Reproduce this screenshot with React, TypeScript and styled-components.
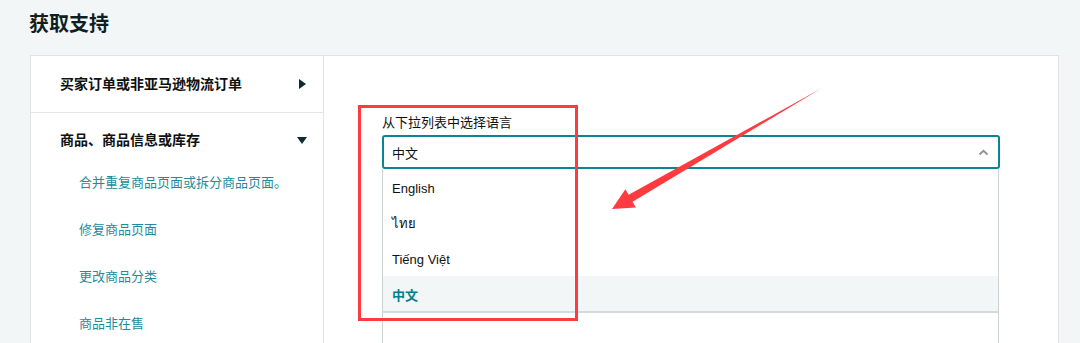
import * as React from "react";
import styled, { createGlobalStyle } from "styled-components";

const GlobalStyle = createGlobalStyle`
  html, body {
    margin: 0;
    padding: 0;
    background: #f3f6f6;
    overflow: hidden;
  }
  body {
    font-family: "Liberation Sans", "Noto Sans CJK SC", "DejaVu Sans", sans-serif;
    color: #0f1111;
  }
`;

const Page = styled.div`
  position: relative;
  width: 1080px;
  height: 343px;
  overflow: hidden;
  padding: 10px 0 0 30px;
  box-sizing: border-box;
`;

const Title = styled.h1`
  margin: 0 0 17px -1px;
  font-size: 20px;
  line-height: 28px;
  font-weight: 700;
  color: #0f1f23;
`;

const Card = styled.div`
  display: grid;
  grid-template-columns: 293px 1fr;
  width: 1029px;
  height: 288px;
  overflow: hidden;
  box-sizing: border-box;
  background: #fff;
  border: 1px solid #dfe3e3;
  border-bottom: none;
`;

const Nav = styled.div`
  border-right: 1px solid #e3e6e6;
`;

const NavRow = styled.div<{ open?: boolean }>`
  padding: ${(p) => (p.open ? "17px 16px 0 29px" : "18px 16px 18px 29px")};
  border-bottom: ${(p) => (p.open ? "none" : "1px solid #e3e6e6")};
`;

const NavHead = styled.div`
  display: flex;
  align-items: center;
  justify-content: space-between;
  font-size: 14px;
  line-height: 20px;
  font-weight: 700;
  color: #0f1111;
`;

const Caret = styled.span<{ down?: boolean }>`
  width: 0;
  height: 0;
  margin-right: ${(p) => (p.down ? "0" : "1px")};
  border-style: solid;
  border-color: transparent;
  ${(p) =>
    p.down
      ? "border-width: 7px 5px 0 5px; border-top-color: #0d2b31;"
      : "border-width: 5px 0 5px 7px; border-left-color: #0d2b31;"}
`;

const SubList = styled.ul`
  list-style: none;
  margin: 9px 0 0;
  padding: 0 0 0 19px;
`;

const SubItem = styled.li`
  padding: 14px 0;
  font-size: 13px;
  line-height: 19px;
  color: #1e8c9c;
`;

const Pane = styled.div`
  padding: 58px 58px 0;
`;

const Label = styled.div`
  font-size: 13px;
  line-height: 18px;
  color: #0f1111;
  margin-bottom: 3px;
`;

const SelectBox = styled.div`
  display: flex;
  align-items: center;
  justify-content: space-between;
  height: 34px;
  box-sizing: border-box;
  padding: 0 9px 0 8px;
  border: 2px solid #0a8595;
  border-radius: 3px;
  font-size: 13px;
  color: #0f1111;
`;

const ListBox = styled.div`
  margin-right: 1px;
  border-left: 1px solid #cdd3d3;
  border-right: 1px solid #cdd3d3;
  border-bottom: 2px solid #d5dbdb;
`;

const Option = styled.div<{ selected?: boolean }>`
  height: 35.5px;
  box-sizing: border-box;
  display: flex;
  align-items: center;
  padding: 3px 0 0 9px;
  font-size: 13px;
  background: ${(p) => (p.selected ? "#f3f6f7" : "#fff")};
  color: ${(p) => (p.selected ? "#007d8c" : "#0f1111")};
  font-weight: ${(p) => (p.selected ? 700 : 400)};
`;

const Filler = styled.div`
  height: 40px;
  margin-right: 1px;
  border-left: 1px solid #cdd3d3;
  border-right: 1px solid #cdd3d3;
`;

const Highlight = styled.div`
  position: absolute;
  left: 358px;
  top: 105px;
  width: 220px;
  height: 216px;
  box-sizing: border-box;
  border: 3px solid #ff3b3f;
  pointer-events: none;
`;

const Overlay = styled.svg`
  position: absolute;
  left: 0;
  top: 0;
  pointer-events: none;
`;

const subItems = ["合并重复商品页面或拆分商品页面。", "修复商品页面", "更改商品分类", "商品非在售"];
const languages = ["English", "ไทย", "Tiếng Việt", "中文"];

export default function App() {
    const selected = "中文";
    return (
        <React.Fragment>
            <GlobalStyle />
            <Page>
                <Title>获取支持</Title>
                <Card>
                    <Nav>
                        <NavRow>
                            <NavHead>
                                买家订单或非亚马逊物流订单
                                <Caret />
                            </NavHead>
                        </NavRow>
                        <NavRow open={true}>
                            <NavHead>
                                商品、商品信息或库存
                                <Caret down={true} />
                            </NavHead>
                            <SubList>
                                {subItems.map((s) => <SubItem key={s}>{s}</SubItem>)}
                            </SubList>
                        </NavRow>
                    </Nav>
                    <Pane>
                        <Label>从下拉列表中选择语言</Label>
                        <SelectBox>
                            {selected}
                            <svg width="11" height="7" viewBox="0 0 11 7">
                                <polyline points="1.5,5.5 5.5,1.8 9.5,5.5" fill="none" stroke="#8a9494" strokeWidth="1.8" />
                            </svg>
                        </SelectBox>
                        <ListBox>
                            {languages.map((l) => (
                                <Option key={l} selected={l === selected}>{l}</Option>
                            ))}
                        </ListBox>
                        <Filler />
                    </Pane>
                </Card>
                <Highlight />
                <Overlay width="1080" height="343" viewBox="0 0 1080 343">
                    <polygon
                        points="822,88 628.6,194.8 625.4,189.2 612,209 635.9,207.4 632.6,201.8"
                        fill="#ff3b3f"
                    />
                </Overlay>
            </Page>
        </React.Fragment>
    );
}
